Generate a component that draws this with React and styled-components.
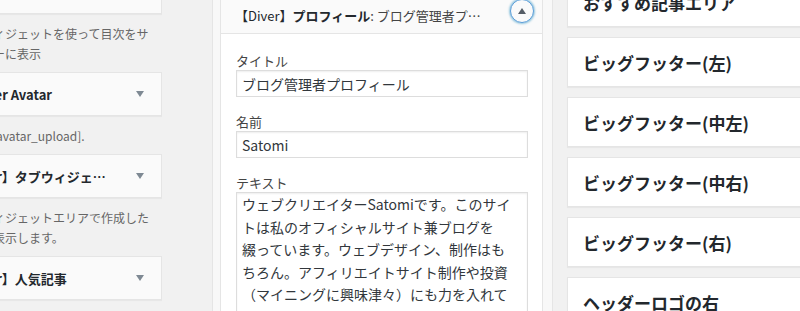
import React from 'react';
import styled, { createGlobalStyle } from 'styled-components';

const Global = createGlobalStyle`
  html, body { margin: 0; padding: 0; background: #f1f1f1; }
  body {
    font-family: "Noto Sans CJK JP", "Noto Sans", sans-serif;
    overflow: hidden;
    color: #23282d;
  }
  * { box-sizing: border-box; }
`;

const Page = styled.div`
  display: flex;
  align-items: flex-start;
  width: 800px;
  height: 311px;
  overflow: hidden;
`;

/* ---------- left column (available widgets, clipped) ---------- */
const LeftCol = styled.div`
  flex: none;
  width: 162px;
  height: 311px;
  overflow: hidden;
`;

const LeftInner = styled.div`
  width: 222px;
  margin-left: -60px;
  margin-top: -30px;
  display: flex;
  flex-direction: column;
`;

const WidgetBox = styled.div`
  height: 44px;
  display: flex;
  align-items: center;
  justify-content: space-between;
  padding: 0 17px 0 14px;
  background: #fafafa;
  border: 1px solid #e5e5e5;
  box-shadow: 0 1px 1px rgba(0, 0, 0, 0.04);
`;

const WidgetName = styled.span`
  font-size: 13px;
  font-weight: 600;
  color: #23282d;
  white-space: nowrap;
`;

const Arrow = styled.span`
  width: 0;
  height: 0;
  border-left: 4px solid transparent;
  border-right: 4px solid transparent;
  border-top: 6px solid #7e8993;
`;

const Desc = styled.p`
  margin: 10px 0 8px;
  padding-left: 17px;
  font-size: 12px;
  line-height: 20px;
  color: #666;
  white-space: nowrap;
`;

/* ---------- middle column (sidebar with open widget) ---------- */
const Holder = styled.div`
  flex: none;
  width: 341px;
  height: 311px;
  margin-left: 50px;
  padding: 0 9px 0 7px;
  background: #f8f8f8;
  border-left: 1px solid #e5e5e5;
  border-right: 1px solid #e5e5e5;
`;

const Widget = styled.div`
  display: flex;
  flex-direction: column;
  margin-top: -3px;
`;

const WidgetHeader = styled.div`
  height: 37px;
  display: flex;
  align-items: center;
  padding: 0 8px 0 14px;
  background: #fafafa;
  border: 1px solid #e5e5e5;
  font-size: 13px;
  white-space: nowrap;
`;

const Bracket = styled.span`
  font-weight: 400;
  color: #23282d;
`;

const Strong = styled.strong`
  font-weight: 700;
  color: #23282d;
`;

const InTitle = styled.span`
  font-weight: 400;
  color: #444;
`;

const Toggle = styled.button`
  margin-left: auto;
  align-self: flex-start;
  margin-top: 1px;
  width: 24px;
  height: 24px;
  padding: 0;
  border-radius: 50%;
  border: 1px solid #5b9dd9;
  background: #fafafa;
  box-shadow: 0 0 2px 1px rgba(30, 140, 190, 0.45);
  display: flex;
  align-items: center;
  justify-content: center;
  &::before {
    content: "";
    width: 0;
    height: 0;
    border-left: 4px solid transparent;
    border-right: 4px solid transparent;
    border-bottom: 6px solid #555d66;
    margin-top: -1px;
  }
`;

const WidgetBody = styled.div`
  height: 290px;
  padding: 0 14px 0 15px;
  background: #fff;
  border-left: 1px solid #e5e5e5;
  border-right: 1px solid #e5e5e5;
  display: flex;
  flex-direction: column;
`;

const Field = styled.div`
  display: flex;
  flex-direction: column;
  margin-top: ${p => p.$top}px;
`;

const Label = styled.label`
  font-size: 13px;
  line-height: 16px;
  color: #444;
  margin-bottom: 1px;
`;

const Input = styled.input`
  height: 27px;
  width: 100%;
  padding: 0 5px;
  border: 1px solid #ddd;
  box-shadow: inset 0 1px 2px rgba(0, 0, 0, 0.07);
  background: #fff;
  font-family: inherit;
  font-size: 14px;
  color: #32373c;
  outline: none;
`;

const TextBox = styled.div`
  height: 200px;
  width: 100%;
  padding: 0 5px;
  border: 1px solid #ddd;
  box-shadow: inset 0 1px 2px rgba(0, 0, 0, 0.07);
  background: #fff;
  font-size: 14px;
  line-height: 22.5px;
  color: #32373c;
  white-space: pre;
  overflow: hidden;
`;

/* ---------- right column (sidebars list) ---------- */
const RightCol = styled.div`
  flex: 1;
  margin-left: 14px;
  margin-right: -20px;
  margin-top: -23px;
  display: flex;
  flex-direction: column;
  gap: 10px;
`;

const SidebarBox = styled.div`
  height: 50px;
  display: flex;
  align-items: center;
  padding-left: 15px;
  background: #fff;
  border: 1px solid #e5e5e5;
  box-shadow: 0 1px 1px rgba(0, 0, 0, 0.04);
`;

const SidebarName = styled.h2`
  margin: 0;
  font-size: 17px;
  font-weight: 700;
  color: #23282d;
  white-space: nowrap;
`;

const bioLines = [
  "ウェブクリエイターSatomiです。このサイ",
  "トは私のオフィシャルサイト兼ブログを",
  "綴っています。ウェブデザイン、制作はも",
  "ちろん。アフィリエイトサイト制作や投資",
  "（マイニングに興味津々）にも力を入れて",
  "います。愛猫は黒ネコのクロです。よろし",
  "くお願いします。",
];

const sidebars = [
  "おすすめ記事エリア",
  "ビッグフッター(左)",
  "ビッグフッター(中左)",
  "ビッグフッター(中右)",
  "ビッグフッター(右)",
  "ヘッダーロゴの右",
];

export default function App() {
  return (
    <>
      <Global />
      <Page>
        <LeftCol>
          <LeftInner>
            <WidgetBox>
              <WidgetName>【Diver】目次</WidgetName>
              <Arrow />
            </WidgetBox>
            <Desc>
              目次ウィジェットを使って目次をサ
              <br />
              イドバーに表示
            </Desc>
            <WidgetBox>
              <WidgetName>WP User Avatar</WidgetName>
              <Arrow />
            </WidgetBox>
            <Desc>Code: [avatar_upload].</Desc>
            <WidgetBox>
              <WidgetName>【Diver】タブウィジェ…</WidgetName>
              <Arrow />
            </WidgetBox>
            <Desc>
              タブウィジェットエリアで作成した
              <br />
              タブで表示します。
            </Desc>
            <WidgetBox>
              <WidgetName>【Diver】人気記事</WidgetName>
              <Arrow />
            </WidgetBox>
          </LeftInner>
        </LeftCol>

        <Holder>
          <Widget>
            <WidgetHeader>
              <Bracket>【Diver】</Bracket>
              <Strong>プロフィール</Strong>
              <InTitle>: ブログ管理者プ…</InTitle>
              <Toggle aria-label="toggle" />
            </WidgetHeader>
            <WidgetBody>
              <Field $top={19}>
                <Label>タイトル</Label>
                <Input readOnly value="ブログ管理者プロフィール" />
              </Field>
              <Field $top={17}>
                <Label>名前</Label>
                <Input readOnly value="Satomi" />
              </Field>
              <Field $top={17}>
                <Label>テキスト</Label>
                <TextBox role="textbox" aria-multiline="true">
                  {bioLines.join("\n")}
                </TextBox>
              </Field>
            </WidgetBody>
          </Widget>
        </Holder>

        <RightCol>
          {sidebars.map((s) => (
            <SidebarBox key={s}>
              <SidebarName>{s}</SidebarName>
            </SidebarBox>
          ))}
        </RightCol>
      </Page>
    </>
  );
}
